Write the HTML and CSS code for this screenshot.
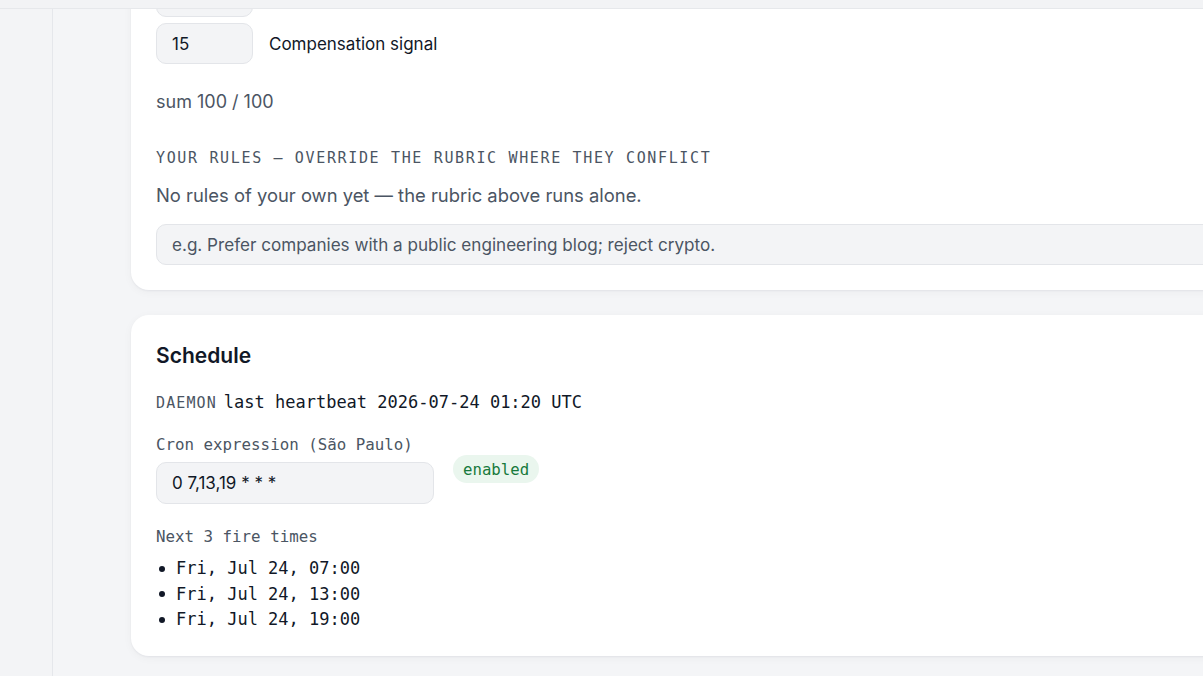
FILE: index.html
```html
<!DOCTYPE html>
<html lang="en">
<head>
<meta charset="utf-8">
<title>Settings</title>
<link rel="stylesheet" href="styles.css">
</head>
<body>
<div class="app">
  <header class="topbar"></header>
  <div class="shell">
    <aside class="sidebar"></aside>
    <main class="main">
      <div class="stack">
        <section class="card card-rubric">
          <div class="weights">
            <div class="weight-row">
              <div class="num-input"></div>
            </div>
            <div class="weight-row">
              <div class="num-input">15</div>
              <span class="weight-label">Compensation signal</span>
            </div>
          </div>
          <p class="sum">sum 100 / 100</p>
          <h3 class="eyebrow">Your rules — override the rubric where they conflict</h3>
          <p class="muted">No rules of your own yet — the rubric above runs alone.</p>
          <div class="text-input placeholder">e.g. Prefer companies with a public engineering blog; reject crypto.</div>
        </section>

        <section class="card card-schedule">
          <h2 class="card-title">Schedule</h2>
          <p class="daemon"><span class="daemon-tag">DAEMON</span><span>last heartbeat 2026-07-24 01:20 UTC</span></p>
          <div class="field">
            <label class="mono-label">Cron expression (São Paulo)</label>
            <div class="cron-row">
              <div class="cron-input">0 7,13,19 * * *</div>
              <span class="badge">enabled</span>
            </div>
          </div>
          <div class="field next">
            <div class="mono-label">Next 3 fire times</div>
            <ul class="fires">
              <li>Fri, Jul 24, 07:00</li>
              <li>Fri, Jul 24, 13:00</li>
              <li>Fri, Jul 24, 19:00</li>
            </ul>
          </div>
        </section>
      </div>
    </main>
  </div>
</div>
</body>
</html>
```
FILE: styles.css
```css
* { box-sizing: border-box; }
html, body { margin: 0; padding: 0; }
body {
  width: 1203px;
  height: 676px;
  overflow: hidden;
  background: #f4f5f7;
  font-family: Inter, "Noto Sans", sans-serif;
  color: #111827;
}
.app { display: flex; flex-direction: column; height: 676px; }
.topbar {
  height: 9px;
  flex: none;
  background: #f2f3f5;
  border-bottom: 1px solid #e6e8eb;
  position: relative;
  z-index: 2;
}
.shell { display: flex; flex: 1; min-height: 0; }
.sidebar {
  width: 53px;
  flex: none;
  background: #f3f4f6;
  border-right: 1px solid #e5e7eb;
}
.main {
  flex: 1;
  min-width: 0;
  overflow: hidden;
  padding-left: 78px;
}
.stack {
  display: flex;
  flex-direction: column;
  gap: 25px;
  margin-top: -57px;
  width: 1200px;
}
.card {
  background: #fff;
  border-radius: 18px;
  box-shadow: 0 1px 2px rgba(17, 24, 39, 0.05), 0 2px 10px rgba(17, 24, 39, 0.04);
  padding: 24px 25px 25px;
}
.weights { display: flex; flex-direction: column; gap: 6px; }
.weight-row { display: flex; align-items: center; gap: 16px; }
.num-input {
  width: 97px;
  height: 41px;
  border: 1px solid #e3e5e9;
  background: #f3f4f6;
  border-radius: 10px;
  padding: 0 15px;
  display: flex;
  align-items: center;
  font-size: 17px;
  color: #111827;
}
.weight-label { font-size: 17px; color: #111827; }
.sum {
  margin: 26px 0 0;
  font-size: 18px;
  color: #4b5563;
  line-height: 24px;
}
.eyebrow {
  margin: 34px 0 0;
  font-family: "DejaVu Sans Mono", "Liberation Mono", monospace;
  font-weight: 400;
  font-size: 15px;
  letter-spacing: 1.65px;
  text-transform: uppercase;
  color: #4b5563;
  line-height: 20px;
}
.muted {
  margin: 15px 0 0;
  font-size: 18.4px;
  line-height: 24px;
  color: #4b5563;
}
.text-input {
  margin-top: 17px;
  height: 41px;
  border: 1px solid #e3e5e9;
  background: #f3f4f6;
  border-radius: 10px;
  padding: 0 15px;
  display: flex;
  align-items: center;
  font-size: 17.1px;
}
.placeholder { color: #4b5563; }

.card-schedule { padding: 28px 25px 23px; }
.card-title {
  margin: 0;
  font-size: 21px;
  font-weight: 600;
  line-height: 26px;
  color: #111827;
}
.daemon {
  margin: 22px 0 0;
  font-family: "DejaVu Sans Mono", "Liberation Mono", monospace;
  font-size: 17px;
  line-height: 22px;
  color: #111827;
  display: flex;
  align-items: baseline;
  gap: 7px;
}
.daemon-tag {
  font-size: 15px;
  letter-spacing: 1.1px;
  color: #4b5563;
}
.field { margin-top: 21px; }
.mono-label {
  display: block;
  font-family: "DejaVu Sans Mono", "Liberation Mono", monospace;
  font-size: 15.8px;
  line-height: 20px;
  color: #4b5563;
}
.cron-row {
  display: flex;
  align-items: flex-start;
  gap: 19px;
  margin-top: 7px;
}
.cron-input {
  width: 278px;
  height: 42px;
  border: 1px solid #e3e5e9;
  background: #f3f4f6;
  border-radius: 10px;
  padding: 0 15px;
  display: flex;
  align-items: center;
  font-size: 17px;
  color: #111827;
}
.badge {
  margin-top: -7px;
  height: 28px;
  padding: 0 10px;
  border-radius: 999px;
  background: #eaf6ee;
  color: #177a3c;
  font-family: "DejaVu Sans Mono", "Liberation Mono", monospace;
  font-size: 15.7px;
  display: inline-flex;
  align-items: center;
}
.next { margin-top: 23px; }
.fires {
  list-style: none;
  margin: 9px 0 0;
  padding: 0;
  font-family: "DejaVu Sans Mono", "Liberation Mono", monospace;
  font-size: 17px;
  line-height: 25.5px;
  color: #111827;
}
.fires li { display: flex; align-items: center; }
.fires li::before {
  content: "";
  width: 6px;
  height: 6px;
  border-radius: 50%;
  background: #111827;
  margin: 0 11px 0 3px;
}
```
